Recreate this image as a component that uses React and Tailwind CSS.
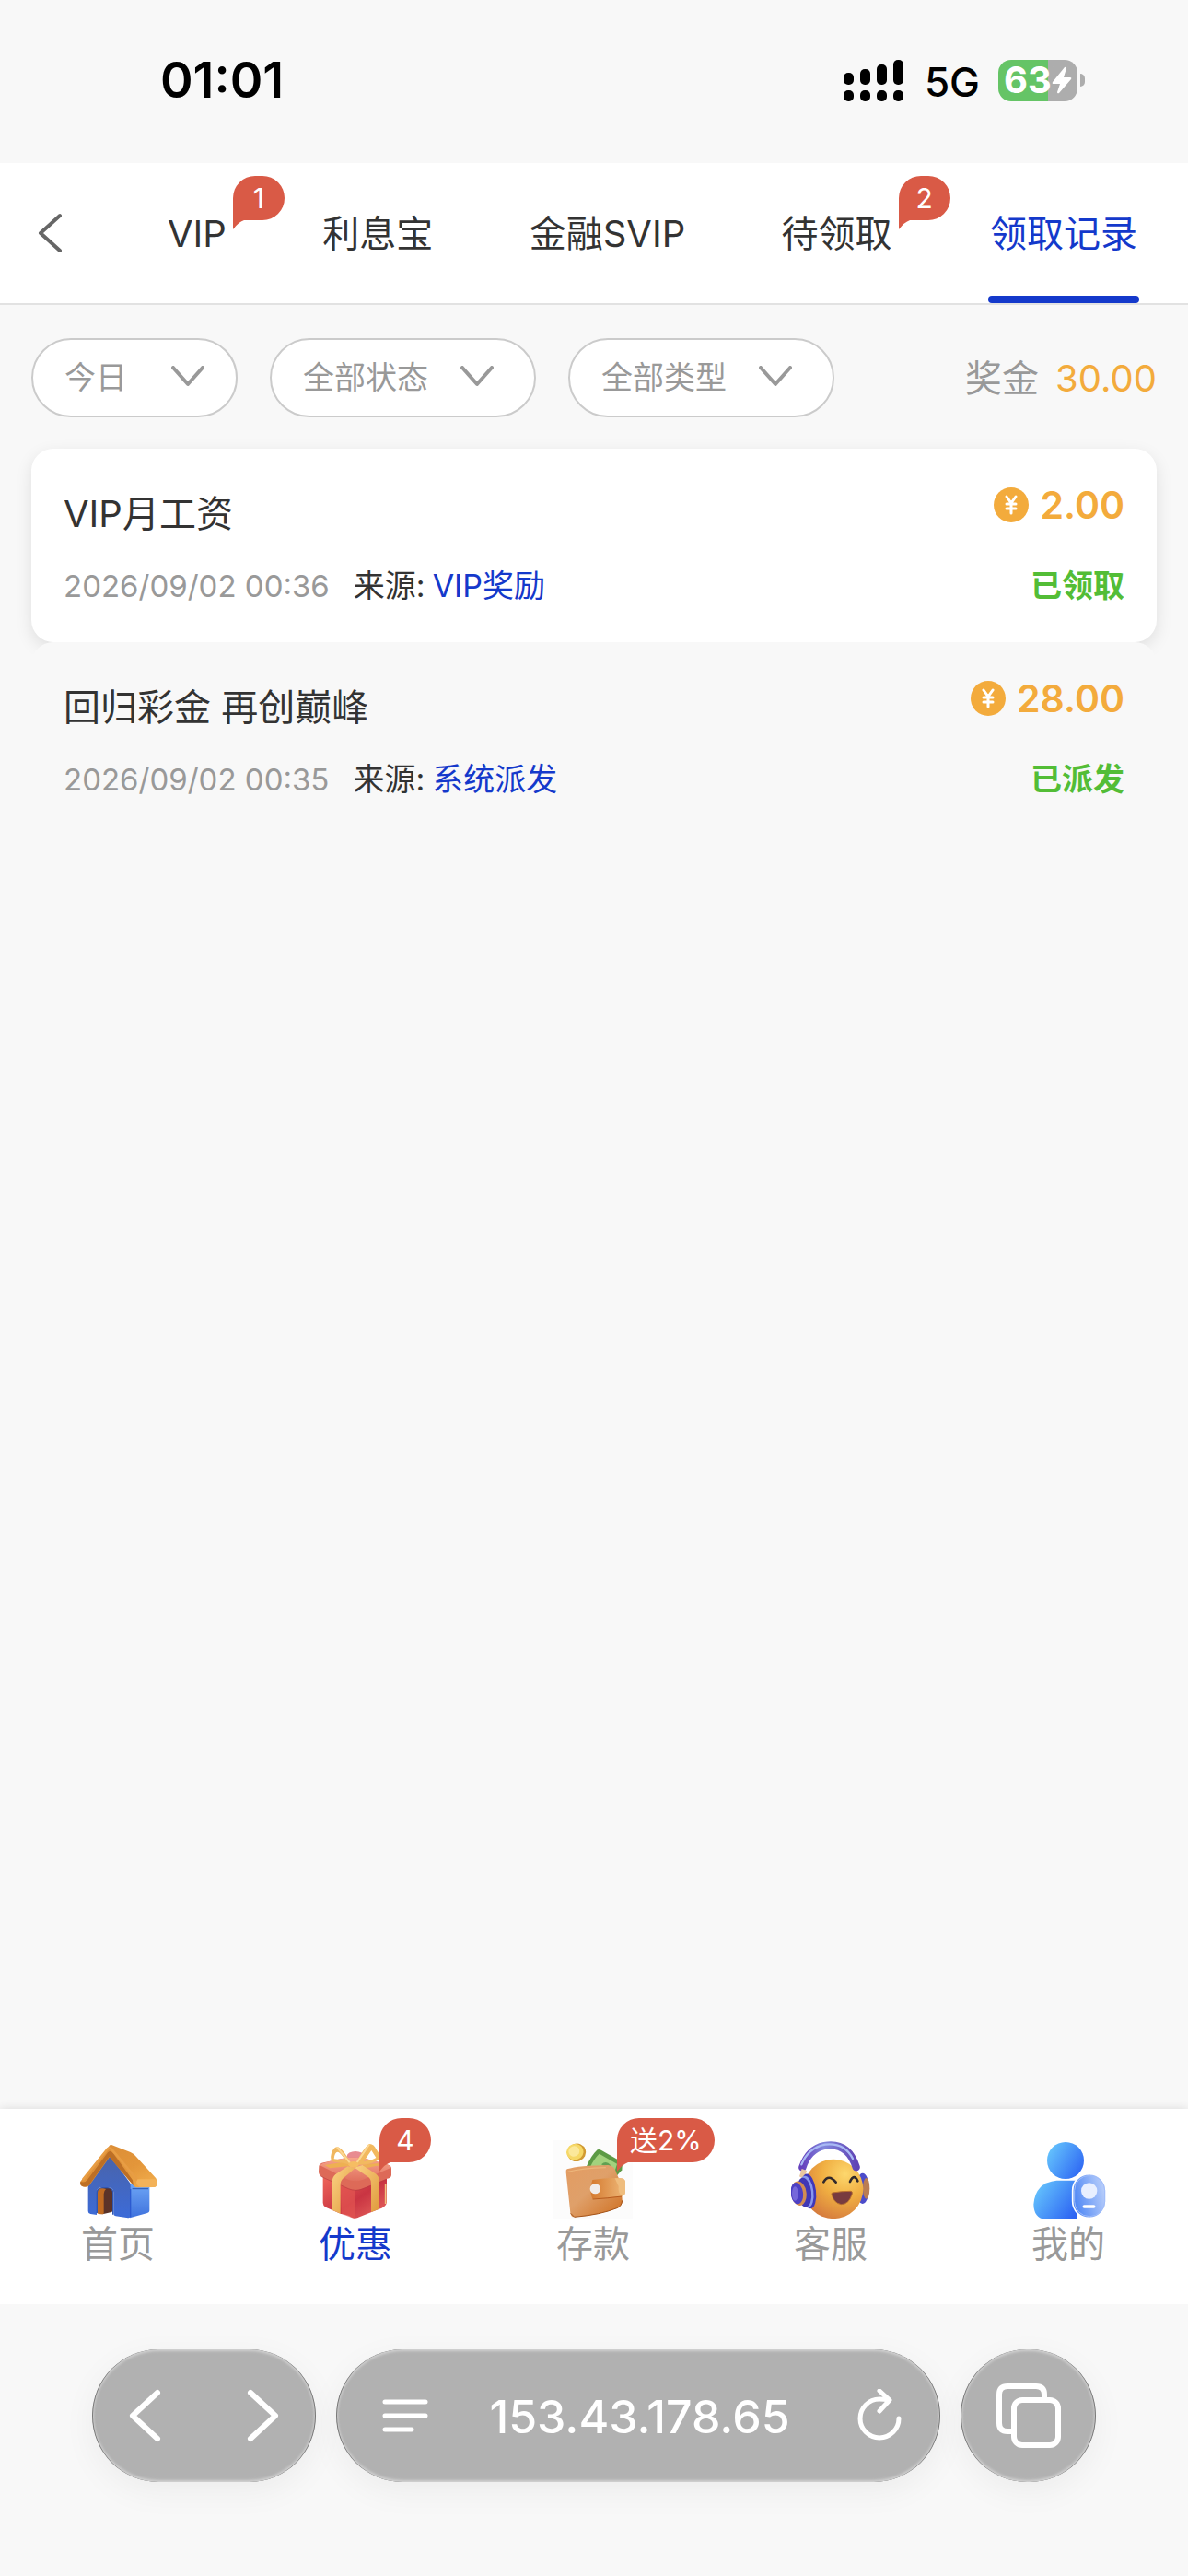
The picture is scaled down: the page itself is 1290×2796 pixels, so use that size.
import React from 'react';
import clsx from 'clsx';

const tabs = [
    { label: 'VIP', badge: '1' },
    { label: '利息宝' },
    { label: '金融SVIP' },
    { label: '待领取', badge: '2' },
    { label: '领取记录', active: true }
];

const filters = [
    { name: '日期', value: '今日', width: 'w-[224px]', arrow: 'right-[36px]' },
    { name: '状态', value: '全部状态', width: 'w-[289px]', arrow: 'right-[46px]' },
    { name: '类型', value: '全部类型', width: 'w-[289px]', arrow: 'right-[46px]' }
];

const records = [
    { title: 'VIP月工资', time: '2026/09/02 00:36', source: 'VIP奖励', amount: '2.00', status: '已领取', raised: true },
    { title: '回归彩金 再创巅峰', time: '2026/09/02 00:35', source: '系统派发', amount: '28.00', status: '已派发' }
];

const Badge = ({ children, className }) => (
    <span className={clsx('absolute flex h-12 min-w-[56px] items-center justify-center whitespace-nowrap rounded-3xl rounded-bl-none bg-[#d95a46] px-[14px] text-[30px] leading-none font-normal text-white', className)}>
        {children}
        <svg className="absolute top-full left-0 h-[10px] w-3" viewBox="0 0 12 10" aria-hidden="true">
            <path d="M0 0h12Q6 2 0 10z" fill="#d95a46" />
        </svg>
    </span>
);

const StatusBar = () => (
    <div className="flex h-[177px] items-center justify-between pr-[112px] pb-[3px] pl-[174px] text-black">
        <span className="text-[54px] leading-none font-semibold">01:01</span>
        <div className="flex items-center">
            <svg className="h-[45px] w-[66px]" viewBox="0 0 66 45" aria-hidden="true">
                <rect x="0" y="14" width="11" height="13" rx="5" />
                <rect x="18" y="10" width="11" height="17" rx="5" />
                <rect x="36" y="5" width="11" height="22" rx="5" />
                <rect x="54" y="0" width="11" height="27" rx="5" />
                <rect x="0" y="33" width="11" height="12" rx="5" />
                <rect x="18" y="33" width="11" height="12" rx="5" />
                <rect x="36" y="33" width="11" height="12" rx="5" />
                <rect x="54" y="33" width="11" height="12" rx="5" />
            </svg>
            <span className="ml-[22px] pt-1 text-[44px] leading-none font-medium">5G</span>
            <span className="ml-5 flex h-[45px] w-[86px] items-center justify-center rounded-[14px] bg-linear-to-r from-[#65c466] from-63% to-[#adadad] to-63% text-[40px] leading-none font-bold text-white">
                63
                <svg className="h-[30px] w-[22px]" viewBox="0 0 22 30" aria-hidden="true">
                    <path d="M14 1 1 17q-1 2 1 2h7L6 28q0 2 2 1L21 14q1-2-1-2h-7l3-10q0-2-2-1z" fill="#fff" />
                </svg>
            </span>
            <span className="ml-[3px] h-[14px] w-[5px] rounded-r-full bg-[#adadad]" />
        </div>
    </div>
);

const TabBar = () => (
    <nav className="flex h-[154px] border-b-2 border-[#e2e2e2] bg-white">
        <button type="button" aria-label="返回" className="flex w-[129px] items-center pl-10">
            <svg className="h-[44px] w-[28px]" viewBox="0 0 28 44" fill="none" stroke="#666" strokeWidth="4" strokeLinecap="round" strokeLinejoin="round">
                <path d="M25 3 4 22l21 19" />
            </svg>
        </button>
        <div className="flex flex-1 justify-between pr-[53px] pl-[53px]">
            {tabs.map((tab) => (
                <button
                    key={tab.label}
                    type="button"
                    className={clsx('relative flex items-center pt-[2px] text-[40px] whitespace-nowrap', tab.active ? 'px-[2px] text-[#1439cb]' : 'text-[#333]')}
                >
                    {tab.label}
                    {tab.badge && <Badge className="top-[14px] left-full ml-[7px]">{tab.badge}</Badge>}
                    {tab.active && <span className="absolute inset-x-0 bottom-0 h-2 rounded-full bg-[#1439cb]" />}
                </button>
            ))}
        </div>
    </nav>
);

const FilterRow = () => (
    <div className="flex items-center gap-[35px] px-[34px] pt-9 pb-[34px]">
        {filters.map((filter) => (
            <div key={filter.name} className={clsx('relative', filter.width)}>
                <select
                    aria-label={filter.name}
                    className="block h-[86px] w-full appearance-none rounded-full border-2 border-[#cbcbcb] bg-white pb-[2px] pl-[34px] text-[34px] text-[#999]"
                >
                    <option>{filter.value}</option>
                </select>
                <svg className={clsx('pointer-events-none absolute top-[30px] h-6 w-9', filter.arrow)} viewBox="0 0 36 24" fill="none" stroke="#999" strokeWidth="4" strokeLinecap="round" strokeLinejoin="round">
                    <path d="m2 2 16 18L34 2" />
                </svg>
            </div>
        ))}
        <p className="ml-auto pt-[2px] text-[40px] leading-none whitespace-nowrap text-[#999]">
            奖金<span className="ml-[18px] text-[#f3ab3c]">30.00</span>
        </p>
    </div>
);

const Coin = () => (
    <svg className="h-[38px] w-[38px]" viewBox="0 0 38 38" fill="none" aria-hidden="true">
        <circle cx="19" cy="19" r="19" fill="#f3ab3c" />
        <path d="m14 10 5 7 5-7M14 18h10M14 23h10M19 17v11" stroke="#fff" strokeWidth="3" strokeLinecap="round" />
    </svg>
);

const RecordItem = ({ record }) => (
    <li
        className={clsx(
            'flex h-[210px] justify-between rounded-3xl px-[35px]',
            record.raised ? 'bg-white shadow-[0_6px_18px_rgba(0,0,0,0.1)]' : 'relative bg-[#f8f8f8]'
        )}
    >
        <div>
            <h3 className="mt-[46px] text-[40px] leading-[50px] text-[#333]">{record.title}</h3>
            <p className="mt-8 text-[34px] leading-[42px] text-[#999]">
                <span className="text-[33px]">{record.time}</span>
                <span className="ml-[26px] text-[#333]">来源:</span>
                <a href="#source" className="ml-2 text-[#1439cb]">{record.source}</a>
            </p>
        </div>
        <div className="text-right">
            <p className="mt-9 flex items-center justify-end gap-3 text-[41px] leading-[50px] font-semibold text-[#f3ab3c]">
                <Coin />
                {record.amount}
            </p>
            <p className="mt-[42px] text-[34px] leading-[42px] font-bold text-[#53bd36]">{record.status}</p>
        </div>
    </li>
);

const HomeIcon = () => (
    <svg className="h-[86px] w-[86px]" viewBox="18 39 258 258" aria-hidden="true">
        <defs>
            <linearGradient id="homeRoof" x1="0" y1="0" x2="1" y2="1">
                <stop offset="0" stopColor="#d98a35" />
                <stop offset="0.6" stopColor="#e3963a" />
                <stop offset="1" stopColor="#f3b04f" />
            </linearGradient>
            <linearGradient id="homeFront" x1="0" y1="0" x2="0" y2="1">
                <stop offset="0" stopColor="#4a63a8" />
                <stop offset="1" stopColor="#3c6bd8" />
            </linearGradient>
            <linearGradient id="homeSide" x1="0" y1="0" x2="0" y2="1">
                <stop offset="0" stopColor="#6da5f5" />
                <stop offset="1" stopColor="#3f72dd" />
            </linearGradient>
        </defs>
        <path d="M186 180h64v88q0 7-7 8l-57 16z" fill="url(#homeSide)" />
        <path d="M118 84 50 168v102q0 7 8 9l20 3v-74q0-16 18-16h18q19 0 19 18v68q0 7 7 8l40 6q8 1 8-7V180z" fill="url(#homeFront)" />
        <path d="M79 276v-66q0-16 17-16h18q17 0 17 17v56q0 6-8 7l-26 6z" fill="#5b3328" />
        <path d="M79 276v-66q0-16 17-16l12 4q-7 6-7 16v64q-12 4-22-2z" fill="#c06b22" />
        <path d="M121 55q5-2 11 1l56 22q12 5 17 13l66 72q3 3 2 12v9q0 8-8 8l-57 1q-7-1-10-6l-78-93-66 92q-8 8-21 4-10-4-8-17z" fill="url(#homeRoof)" />
        <path d="M25 174q-3 13 8 16 13 3 20-5l66-92 79 94-3-18-62-86q-10-14-19-4l-66 88q-8 12-23 7z" fill="#bd6f25" />
        <path d="m34 166 78-97q7-8 15 0l82 98" fill="none" stroke="#e89d44" strokeWidth="8" strokeLinecap="round" />
        <path d="M211 166h54q8 0 8 9v8q0 8-8 8h-48q-15-11-6-25z" fill="#f3b259" />
        <path d="M188 198v90" fill="none" stroke="#2c5ad0" strokeWidth="4" />
        <path d="M79 276v-66q0-16 17-16h18q17 0 17 17v70" fill="none" stroke="#2f55b0" strokeWidth="4" />
        <path d="M194 197h52" stroke="#2c56ad" strokeWidth="3" />
    </svg>
);

const GiftIcon = () => (
    <svg className="h-[86px] w-[86px]" viewBox="24 99 258 258" aria-hidden="true">
        <defs>
            <linearGradient id="giftBody" x1="0" y1="0" x2="1" y2="1">
                <stop offset="0" stopColor="#f0685a" />
                <stop offset="0.55" stopColor="#c93442" />
                <stop offset="1" stopColor="#e8685f" />
            </linearGradient>
            <linearGradient id="giftLid" x1="0" y1="0" x2="0" y2="1">
                <stop offset="0" stopColor="#f7a68c" />
                <stop offset="1" stopColor="#e0705e" />
            </linearGradient>
            <linearGradient id="giftRibbon" x1="0" y1="0" x2="1" y2="1">
                <stop offset="0" stopColor="#fbd283" />
                <stop offset="1" stopColor="#e09a3d" />
            </linearGradient>
        </defs>
        <path d="M47 215v88q0 9 9 14l50 22q22 2 32 10 14 8 28 0l62-25q24-8 27-22v-92z" fill="url(#giftBody)" />
        <path d="m105 240 2 98 31 12q8 4 14 3v-95z" fill="#e25651" opacity="0.7" />
        <ellipse cx="153" cy="151" rx="28" ry="16" fill="#e88b91" />
        <path d="M34 183q2-8 15-11l60-13q40-8 80 1l64 17q17 4 17 14v21q0 9-14 12l-83 33q-22 9-44-1l-84-37q-12-6-12-17z" fill="#dd6a58" />
        <path d="M36 180q15-10 73-21 40-8 80 1l64 17q18 6 15 12l-92 39q-23 8-47-1z" fill="url(#giftLid)" />
        {/* ribbon strips over the lid and down both faces */}
        <path d="m128 184 24 6-38 32q-10 8-10 22v94l-27-12v-90q0-17 11-26z" fill="url(#giftRibbon)" />
        <path d="m150 188 26-8 42 28q12 8 12 24v91l-26 10v-94q0-14-10-21z" fill="url(#giftRibbon)" />
        <path d="m52 180 62-10 26 12-70 8zM176 180q25-7 61-5l18 6q-33-1-65 8z" fill="#eeb052" />
        <path d="M141 181q-26-52-45-60-15-2-22 23-6 21 9 26 29 0 58 11zM83 160q2-24 13-23 10 4 24 27z" fill="#f0b75f" fillRule="evenodd" />
        <path d="M151 180q29-58 48-69 14 0 22 18l16 24q-20 28-86 27zm29-12q32-5 40-12l-15-24z" fill="#f2b95f" fillRule="evenodd" />
        <path d="m94 123 46 56M197 114l-42 62" fill="none" stroke="#fcd793" strokeWidth="6" strokeLinecap="round" />
        <ellipse cx="147" cy="178" rx="17" ry="10" fill="#f6bd63" />
        <path d="M40 216q10 6 36 17m30 13 24 11q24 10 46 1l26-10m28-12 22-9" fill="none" stroke="#b63c40" strokeWidth="3" opacity="0.6" />
        <path d="M251 240v66" stroke="#f3c481" strokeWidth="5" />
    </svg>
);

const WalletIcon = () => (
    <svg className="h-[86px] w-[86px] bg-[#fcfcfc]" viewBox="24 99 258 258" aria-hidden="true">
        <defs>
            <linearGradient id="walletBody" x1="0" y1="0" x2="1" y2="1">
                <stop offset="0" stopColor="#e39c62" />
                <stop offset="0.45" stopColor="#dfa06a" />
                <stop offset="1" stopColor="#cf6f20" />
            </linearGradient>
            <linearGradient id="walletFlap" x1="0" y1="0" x2="1" y2="0">
                <stop offset="0" stopColor="#d5792e" />
                <stop offset="1" stopColor="#eeb97a" />
            </linearGradient>
        </defs>
        <ellipse cx="99" cy="139" rx="31" ry="29" fill="#d19a32" transform="rotate(-20 99 139)" />
        <ellipse cx="94" cy="137" rx="28" ry="26" fill="#f6d867" transform="rotate(-20 94 137)" />
        <ellipse cx="91" cy="135" rx="18" ry="17" fill="#fbe89b" transform="rotate(-20 91 135)" />
        <path d="M131 186q14-35 36-56 5-2 12 1l70 40-2 25-18 20z" fill="#5c9a45" />
        <path d="M145 184q9-22 28-41l58 33-11 36z" fill="#a2d27d" />
        <path d="M180 178q15-15 30 2v14z" fill="#61a052" />
        <path d="M68 193q40-12 134-13 22 1 28 28l15 34 3 55q1 15-17 23-57 23-140 29-10 0-12-14L65 204q-1-9 3-11z" fill="url(#walletBody)" />
        <path d="m80 337 12 12q84-7 139-29 15-6 17-25" fill="none" stroke="#a45319" strokeWidth="3" />
        <path d="M151 228q58-9 95-5 11 1 12 12v33q0 10-9 13l-98 9q-12-27 0-62z" fill="url(#walletFlap)" />
        <path d="M152 291q50-3 94-9" fill="none" stroke="#b85c1e" strokeWidth="3" />
        <path d="M224 223q30-2 34 10v35q0 8-9 12-15-5-13-31z" fill="#efbd7e" />
        <circle cx="160" cy="257" r="17" fill="#f1ecea" />
        <path d="M71 202q48-12 122-14" fill="none" stroke="#ecb67c" strokeWidth="4" strokeLinecap="round" />
    </svg>
);

const ServiceIcon = () => (
    <svg className="h-[86px] w-[86px]" viewBox="30 39 258 258" aria-hidden="true">
        <defs>
            <radialGradient id="faceFill" cx="0.7" cy="0.25" r="0.8">
                <stop offset="0" stopColor="#fdd76d" />
                <stop offset="0.5" stopColor="#f0ae41" />
                <stop offset="1" stopColor="#d67d3e" />
            </radialGradient>
            <linearGradient id="bandFill" x1="0" y1="0" x2="1" y2="0">
                <stop offset="0" stopColor="#6541bd" />
                <stop offset="0.4" stopColor="#8287dd" />
                <stop offset="1" stopColor="#6044b5" />
            </linearGradient>
        </defs>
        <ellipse cx="263" cy="196" rx="21" ry="50" fill="#4c4cca" />
        <ellipse cx="275" cy="196" rx="11" ry="34" fill="#bb7d52" />
        <circle cx="168" cy="198" r="97" fill="url(#faceFill)" />
        <path d="M67 128q20-60 71-71 78-13 104 70" fill="none" stroke="url(#bandFill)" strokeWidth="25" strokeLinecap="round" />
        <path d="M64 118q22-54 77-65 63-7 90 46" fill="none" stroke="#a9baf5" strokeWidth="7" strokeLinecap="round" />
        <path d="m57 157 8-25 16 6-8 29z" fill="#e9c6a0" />
        <ellipse cx="87" cy="205" rx="24" ry="57" fill="#3f37ba" transform="rotate(-7 87 205)" />
        <ellipse cx="80" cy="207" rx="23" ry="52" fill="#8998ed" transform="rotate(-7 80 207)" />
        <ellipse cx="73" cy="209" rx="23" ry="48" fill="#4037b5" transform="rotate(-7 73 209)" />
        <ellipse cx="55" cy="212" rx="25" ry="40" fill="#d18c52" transform="rotate(-7 55 212)" />
        <ellipse cx="49" cy="212" rx="20" ry="35" fill="#4d40c4" transform="rotate(-7 49 212)" />
        <ellipse cx="43" cy="213" rx="10" ry="23" fill="#7668da" />
        <path d="M136 175q16-28 40 1M222 174q13-28 25-2" fill="none" stroke="#322a2c" strokeWidth="8" strokeLinecap="round" />
        <path d="M165 210q28-5 60-5 5 1 4 8-10 35-36 35-23-4-31-32-1-6 3-6z" fill="#783b3f" stroke="#b87030" strokeWidth="3" />
    </svg>
);

const ProfileIcon = () => (
    <svg className="h-[86px] w-[86px]" viewBox="24 39 258 258" aria-hidden="true">
        <defs>
            <linearGradient id="profileFill" x1="0" y1="0.2" x2="1" y2="0.8">
                <stop offset="0" stopColor="#66c6fd" />
                <stop offset="1" stopColor="#2d65f3" />
            </linearGradient>
            <linearGradient id="profileTag" x1="0" y1="0.6" x2="1" y2="0.3">
                <stop offset="0" stopColor="#4b85f4" />
                <stop offset="1" stopColor="#bdd1fb" />
            </linearGradient>
        </defs>
        <circle cx="144" cy="105" r="60" fill="url(#profileFill)" />
        <path d="M40 248q5-71 75-78h65v126H76q-35-5-36-48z" fill="url(#profileFill)" />
        <rect x="167" y="149" width="109" height="143" rx="54" fill="url(#profileTag)" stroke="#fff" strokeWidth="5" />
        <rect x="173" y="154" width="99" height="133" rx="49" fill="none" stroke="#9fbcfa" strokeWidth="3" />
        <circle cx="221" cy="204" r="26" fill="#e8efff" />
        <path d="M205 255h31" stroke="#fff" strokeWidth="11" strokeLinecap="round" />
    </svg>
);

const navItems = [
    { label: '首页', Icon: HomeIcon },
    { label: '优惠', Icon: GiftIcon, badge: '4', active: true },
    { label: '存款', Icon: WalletIcon, badge: '送2%' },
    { label: '客服', Icon: ServiceIcon },
    { label: '我的', Icon: ProfileIcon }
];

const BottomNav = () => (
    <nav className="grid h-[212px] grid-cols-5 bg-white shadow-[0_0_10px_rgba(0,0,0,0.12)]">
        {navItems.map(({ label, Icon, badge, active }) => (
            <a
                key={label}
                href={`#${label}`}
                className={clsx('relative flex flex-col items-center pt-[34px] pr-[2px] text-[40px] leading-[54px]', active ? 'text-[#1439cb]' : 'text-[#999]')}
            >
                <Icon />
                {label}
                {badge && <Badge className="top-[10px] left-1/2 ml-[25px]">{badge}</Badge>}
            </a>
        ))}
    </nav>
);

const glass = 'flex h-36 items-center rounded-full border-x border-[#777] bg-[#b1b1b1] text-white shadow-[inset_0_2px_3px_#d2d2d2,inset_0_-2px_3px_#d2d2d2,0_10px_36px_rgba(0,0,0,0.05)]';

const BrowserBar = () => (
    <div className="relative flex gap-[22px] bg-[#f8f8f8] px-[100px] pt-[49px] pb-[102px]">
        <div className={clsx(glass, 'w-[243px] justify-between px-[38px]')}>
            <button type="button" aria-label="后退">
                <svg className="h-[60px] w-[38px]" viewBox="0 0 38 60" fill="none" stroke="currentColor" strokeWidth="6" strokeLinecap="round" strokeLinejoin="round">
                    <path d="M32 5 5 30l27 25" />
                </svg>
            </button>
            <button type="button" aria-label="前进">
                <svg className="h-[60px] w-[38px]" viewBox="0 0 38 60" fill="none" stroke="currentColor" strokeWidth="6" strokeLinecap="round" strokeLinejoin="round">
                    <path d="m6 5 27 25L6 55" />
                </svg>
            </button>
        </div>
        <div className={clsx(glass, 'flex-1 justify-between pr-10 pl-[49px]')}>
            <button type="button" aria-label="页面菜单">
                <svg className="h-10 w-[50px]" viewBox="0 0 50 40" fill="none" stroke="currentColor" strokeWidth="5" strokeLinecap="round">
                    <path d="M3 5h44M3 20h44M3 35h29" />
                </svg>
            </button>
            <span className="pr-[6px] pt-[2px] text-[50px] leading-none font-medium">153.43.178.65</span>
            <button type="button" aria-label="重新加载">
                <svg className="h-[58px] w-[50px]" viewBox="0 0 50 58" fill="none" stroke="currentColor" strokeWidth="5" strokeLinecap="round" strokeLinejoin="round">
                    <path d="M46 32A21 21 0 1 1 25 11q5 0 10 1M25 2l11 10-11 12" />
                </svg>
            </button>
        </div>
        <button type="button" aria-label="标签页" className={clsx(glass, 'w-[147px] justify-center')}>
            <svg className="h-[70px] w-[70px]" viewBox="0 0 70 70" fill="none" stroke="currentColor" strokeWidth="6" strokeLinejoin="round">
                <path d="M18 52h-6q-9 0-9-9V12q0-9 9-9h31q9 0 9 9v6" />
                <rect x="19" y="18" width="48" height="49" rx="9" />
            </svg>
        </button>
    </div>
);

const App = () => (
    <div className="flex min-h-screen flex-col bg-[#f8f8f8] font-['Inter','Noto_Sans_CJK_SC',sans-serif]">
        <StatusBar />
        <TabBar />
        <main className="flex-1">
            <FilterRow />
            <ul className="px-[34px]">
                {records.map((record) => (
                    <RecordItem key={record.time} record={record} />
                ))}
            </ul>
        </main>
        <BottomNav />
        <BrowserBar />
    </div>
);

export default App;
